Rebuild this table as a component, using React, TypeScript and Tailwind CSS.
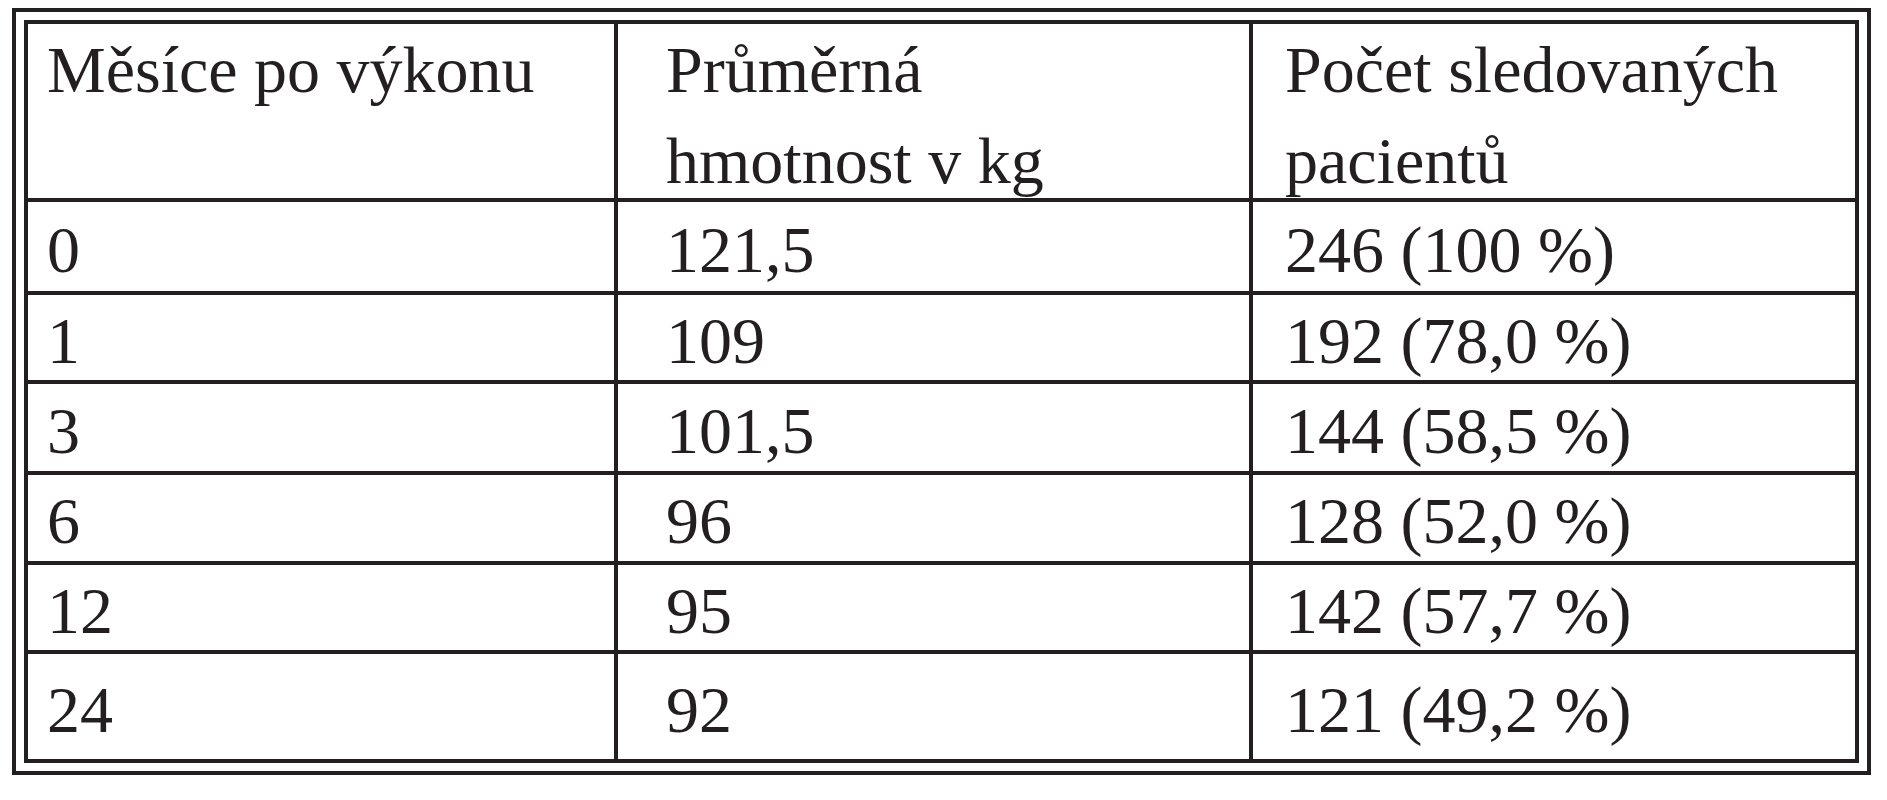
const header = [
  { lines: ["Měsíce po výkonu"] },
  { lines: ["Průměrná", "hmotnost v kg"] },
  { lines: ["Počet sledovaných", "pacientů"] },
];

const rows = [
  { h: "h-[89px]", cells: ["0", "121,5", "246 (100 %)"] },
  { h: "h-[85px]", cells: ["1", "109", "192 (78,0 %)"] },
  { h: "h-[87px]", cells: ["3", "101,5", "144 (58,5 %)"] },
  { h: "h-[86px]", cells: ["6", "96", "128 (52,0 %)"] },
  { h: "h-[85px]", cells: ["12", "95", "142 (57,7 %)"] },
  { h: "h-[105px]", cells: ["24", "92", "121 (49,2 %)"] },
];

const widths = ["w-[590px]", "w-[635px]", "w-[602px]"];
const pads = ["pl-[19px]", "pl-[48px]", "pl-[32px]"];

export default function App() {
  return (
    <div className="min-h-screen bg-white pt-[8px] pl-[12px] text-[#231f20] font-['Liberation_Serif','Times_New_Roman',serif] text-[66px]">
      <div className="w-[1859px] border-4 border-[#231f20] p-[8px]">
        <div className="border-4 border-[#231f20]">
          {/* header */}
          <div className="flex border-b-4 border-[#231f20]">
            {header.map((c, i) => (
              <div
                key={i}
                className={`${widths[i]} h-[174px] ${pads[i]} leading-[91px] ${i < 2 ? "border-r-4 border-[#231f20]" : ""}`}
              >
                {c.lines.map((l) => (
                  <div key={l} className="whitespace-nowrap">
                    {l}
                  </div>
                ))}
              </div>
            ))}
          </div>

          {rows.map((r, ri) => (
            <div
              key={ri}
              className={`flex ${ri < rows.length - 1 ? "border-b-4 border-[#231f20]" : ""}`}
            >
              {r.cells.map((c, i) => (
                <div
                  key={i}
                  className={`${widths[i]} ${r.h} ${pads[i]} pt-[5px] flex items-center whitespace-nowrap ${i < 2 ? "border-r-4 border-[#231f20]" : ""}`}
                >
                  {c}
                </div>
              ))}
            </div>
          ))}
        </div>
      </div>
    </div>
  );
}
